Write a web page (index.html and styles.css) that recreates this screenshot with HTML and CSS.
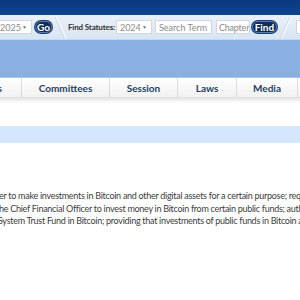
FILE: index.html
```html
<!DOCTYPE html>
<html>
<head>
<meta charset="utf-8">
<link rel="stylesheet" href="styles.css">
</head>
<body>
<div class="page">
  <header class="top"></header>
  <div class="toolbar">
    <div class="select sel-a"><span>2025</span><span class="caret">▼</span></div>
    <button class="btn go">Go</button>
    <svg class="slash" width="14" height="25" viewBox="0 0 14 25"><path d="M2 2 Q6 10 12 24" stroke="#ffffff" stroke-width="1.4" fill="none"/><path d="M1 2 Q5 10 11 24" stroke="#c3cfdd" stroke-width="0.8" fill="none"/></svg>
    <span class="label">Find Statutes:</span>
    <div class="select sel-b"><span>2024</span><span class="caret">▼</span></div>
    <div class="input term">Search Term</div>
    <div class="input chap">Chapter</div>
    <button class="btn find">Find</button>
    <svg class="slash2" width="14" height="25" viewBox="0 0 14 25"><path d="M12 2 Q8 10 2 24" stroke="#ffffff" stroke-width="1.4" fill="none"/><path d="M11 2 Q7 10 1 24" stroke="#c3cfdd" stroke-width="0.8" fill="none"/></svg>
    <div class="input last">Se</div>
  </div>
  <div class="band"></div>
  <nav class="nav">
    <div class="item i0">Senators</div>
    <div class="item i1">Committees</div>
    <div class="item i2">Session</div>
    <div class="item i3">Laws</div>
    <div class="item i4">Media</div>
    <div class="item i5">Publications</div>
  </nav>
  <div class="shadow"></div>
  <div class="tabbar"></div>
  <div class="summary">
    <div class="line l1">er to make investments in Bitcoin and other digital assets for a certain purpose; requiring</div>
    <div class="line l2">he Chief Financial Officer to invest money in Bitcoin from certain public funds; authorizing</div>
    <div class="line l3">System Trust Fund in Bitcoin; providing that investments of public funds in Bitcoin are subject</div>
  </div>
</div>
</body>
</html>
```
FILE: styles.css
```css
html, body {
  margin: 0;
  padding: 0;
  background: #ffffff;
}
.page {
  width: 300px;
  height: 300px;
  overflow: hidden;
  font-family: Lato, "Liberation Sans", sans-serif;
}
.top {
  height: 15px;
  background: linear-gradient(#0a3a80, #0d4490);
}
.toolbar {
  height: 25px;
  background: linear-gradient(#e9f0f9, #d9e5f3);
  display: flex;
  align-items: center;
  margin-left: -4px;
  width: 340px;
  box-sizing: border-box;
  border-bottom: 1px solid #c9d7e8;
}
.toolbar > * {
  flex-shrink: 0;
  white-space: nowrap;
}
.select, .input {
  height: 14px;
  box-sizing: border-box;
  background: #fff;
  border: 1px solid #cfd7e1;
  font-size: 9px;
  color: #8a8a8a;
  display: flex;
  align-items: center;
  padding-left: 3px;
  overflow: hidden;
}
.select {
  justify-content: space-between;
  padding-right: 4px;
}
.caret {
  font-size: 5px;
  color: #777;
}
.sel-a { width: 36px; }
.btn {
  border: 1px solid #5a7aa8;
  background: #0f2d5b;
  color: #fff;
  font-family: Lato, sans-serif;
  font-weight: bold;
  font-size: 10px;
  height: 12px;
  border-radius: 7px;
  padding: 0;
  line-height: 10px;
  box-shadow: 0 0 0 1px #1d3f70;
}
.go { width: 17px; margin-left: 3px; }
.slash { margin-left: 2px; }
.label {
  font-size: 8px;
  font-weight: bold;
  color: #333;
  margin-left: 0;
  letter-spacing: -0.15px;
}
.sel-b { width: 36px; margin-left: 1px; }
.term { width: 57px; margin-left: 3px; }
.chap { width: 34px; margin-left: 4px; padding-left: 2px; letter-spacing: -0.2px; }
.find { width: 25px; margin-left: 2px; }
.slash2 { margin-left: 2px; }
.last { width: 40px; margin-left: 3px; }
.band {
  height: 37px;
  background: #88b0e1;
}
.nav {
  height: 20px;
  display: flex;
  background: linear-gradient(#ffffff, #f1f1f1);
  border-top: 1px solid #a9c6ea;
  box-sizing: border-box;
  margin-left: -40px;
  width: 400px;
}
.item {
  display: flex;
  align-items: center;
  justify-content: center;
  font-size: 10px;
  font-weight: bold;
  color: #243f63;
  border-right: 1px solid #dcdcdc;
  box-sizing: border-box;
  flex-shrink: 0;
}
.i0 { width: 62px; justify-content: flex-end; padding-right: 19px; }
.i1 { width: 88px; }
.i2 { width: 68px; }
.i3 { width: 59px; }
.i4 { width: 61px; }
.i5 { width: 62px; border-right: none; }
.shadow {
  height: 6px;
  background: linear-gradient(#dedede, #ffffff);
}
.tabbar {
  height: 17px;
  margin-top: 23px;
  background: #d4e7fe;
}
.summary {
  margin-top: 47px;
  font-size: 9px;
  letter-spacing: -0.28px;
  line-height: 12.5px;
  color: #3c3c3c;
  white-space: nowrap;
}
.l1 { margin-left: -1px; }
.l2 { margin-left: -1px; }
.l3 { margin-left: -2px; }
```
